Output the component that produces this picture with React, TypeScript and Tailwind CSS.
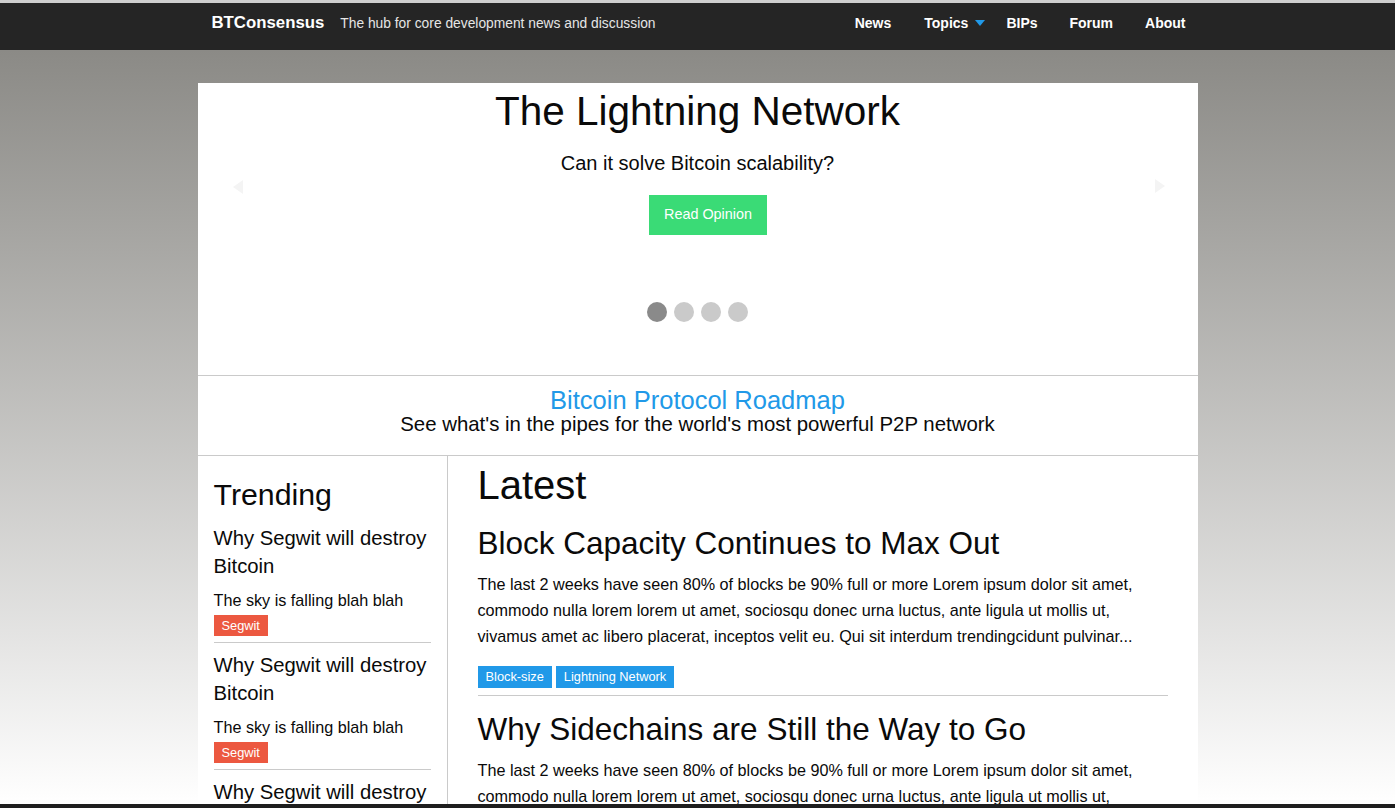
import React from 'react';

const para =
  'The last 2 weeks have seen 80% of blocks be 90% full or more Lorem ipsum dolor sit amet, commodo nulla lorem lorem ut amet, sociosqu donec urna luctus, ante ligula ut mollis ut, vivamus amet ac libero placerat, inceptos velit eu. Qui sit interdum trendingcidunt pulvinar...';

const trending = [1, 2, 3, 4];

const articles = [
  { title: 'Block Capacity Continues to Max Out', tags: ['Block-size', 'Lightning Network'] },
  { title: 'Why Sidechains are Still the Way to Go', tags: ['Sidechains'] },
];

const App = () => {
  return (
    <div className="h-screen flex flex-col overflow-hidden text-[#0a0a0a] font-['Liberation_Sans',Arial,sans-serif]">
      <div className="h-[3px] bg-[#cfcfcf]" />

      {/* Top bar */}
      <header className="h-[47px] bg-[#252525] pb-[7px] flex items-center">
        <div className="w-[1000px] mx-auto pl-[14px] pr-[12px] flex items-center justify-between">
          <div className="flex items-baseline">
            <span className="text-white font-bold text-[16.8px]">BTConsensus</span>
            <span className="ml-[16px] text-[13.8px] text-[#e6e6e6]">The hub for core development news and discussion</span>
          </div>
          <nav className="flex items-center text-white font-bold text-[14px]">
            <a href="#">News</a>
            <a href="#" className="ml-[33px] flex items-center">
              Topics
              <svg className="ml-[7px]" width="10" height="6" viewBox="0 0 10 6">
                <path d="M0 0 L10 0 L5 6 Z" fill="#2199e8" />
              </svg>
            </a>
            <a href="#" className="ml-[21px]">BIPs</a>
            <a href="#" className="ml-[32px]">Forum</a>
            <a href="#" className="ml-[32px]">About</a>
          </nav>
        </div>
      </header>

      <div className="flex-1 overflow-hidden bg-linear-to-b from-[#8b8a86] to-[#ffffff]">
        <main className="w-[1000px] mx-auto mt-[33px] bg-white">
          {/* Carousel */}
          <section className="relative border-b border-[#cacaca] pb-[53px] flex flex-col items-center">
            <h2 className="text-[40.5px] leading-[56px] mb-2">The Lightning Network</h2>
            <p className="text-[20px] leading-[32px] mb-4">Can it solve Bitcoin scalability?</p>
            <button className="ml-[21px] h-[40px] w-[118px] bg-[#3adb76] text-white text-[14.4px]">Read Opinion</button>
            <div className="mt-[67px] flex gap-[7px]">
              <span className="w-5 h-5 rounded-full bg-[#8a8a8a]" />
              <span className="w-5 h-5 rounded-full bg-[#cacaca]" />
              <span className="w-5 h-5 rounded-full bg-[#cacaca]" />
              <span className="w-5 h-5 rounded-full bg-[#cacaca]" />
            </div>
            <svg className="absolute left-[35px] top-[97px]" width="10" height="14" viewBox="0 0 10 14">
              <path d="M10 0 L0 7 L10 14 Z" fill="#f4f4f4" />
            </svg>
            <svg className="absolute right-[33px] top-[96px]" width="10" height="14" viewBox="0 0 10 14">
              <path d="M0 0 L10 7 L0 14 Z" fill="#f4f4f4" />
            </svg>
          </section>

          {/* Roadmap */}
          <section className="border-b border-[#cacaca] pt-[12px] pb-[19px] text-center">
            <a href="#" className="block text-[25.5px] leading-[24px] text-[#2199e8]">Bitcoin Protocol Roadmap</a>
            <p className="text-[20.4px] leading-[24px]">See what's in the pipes for the world's most powerful P2P network</p>
          </section>

          <div className="flex">
            {/* Trending */}
            <aside className="w-[250px] shrink-0 border-r border-[#cacaca] px-4 pt-[18px]">
              <h3 className="text-[30.3px] leading-[42px] mb-[8px]">Trending</h3>
              {trending.map((i) => (
                <div key={i} className={`border-b border-[#cacaca] pb-[5px] ${i > 1 ? 'pt-2' : ''}`}>
                  <h5 className="text-[20.3px] leading-[28px] mb-[7px]">Why Segwit will destroy Bitcoin</h5>
                  <p className="text-[16.2px] leading-[26px]">The sky is falling blah blah</p>
                  <span className="mt-[2px] inline-flex h-[21px] items-center px-2 bg-[#ec5840] text-white text-[12.8px]">Segwit</span>
                </div>
              ))}
            </aside>

            {/* Latest */}
            <section className="flex-1 pl-[30px] pr-[30px] pt-[1px]">
              <h2 className="text-[40px] leading-[56px] mb-[8px]">Latest</h2>
              {articles.map((a, idx) => (
                <article key={a.title} className={`border-b border-[#cacaca] pb-[7px] ${idx > 0 ? 'pt-[11px]' : ''}`}>
                  <h3 className="text-[31.5px] leading-[44px] mb-[6px]">{a.title}</h3>
                  <p className="text-[16.2px] leading-[26px] mb-[17px]">{para}</p>
                  <div className="flex gap-1">
                    {a.tags.map((t) => (
                      <span key={t} className="inline-flex h-[22px] items-center px-2 bg-[#2199e8] text-white text-[12.8px]">{t}</span>
                    ))}
                  </div>
                </article>
              ))}
            </section>
          </div>
        </main>
      </div>

      <div className="h-[4px] bg-[#1e1e1e]" />
    </div>
  );
};

export default App;
